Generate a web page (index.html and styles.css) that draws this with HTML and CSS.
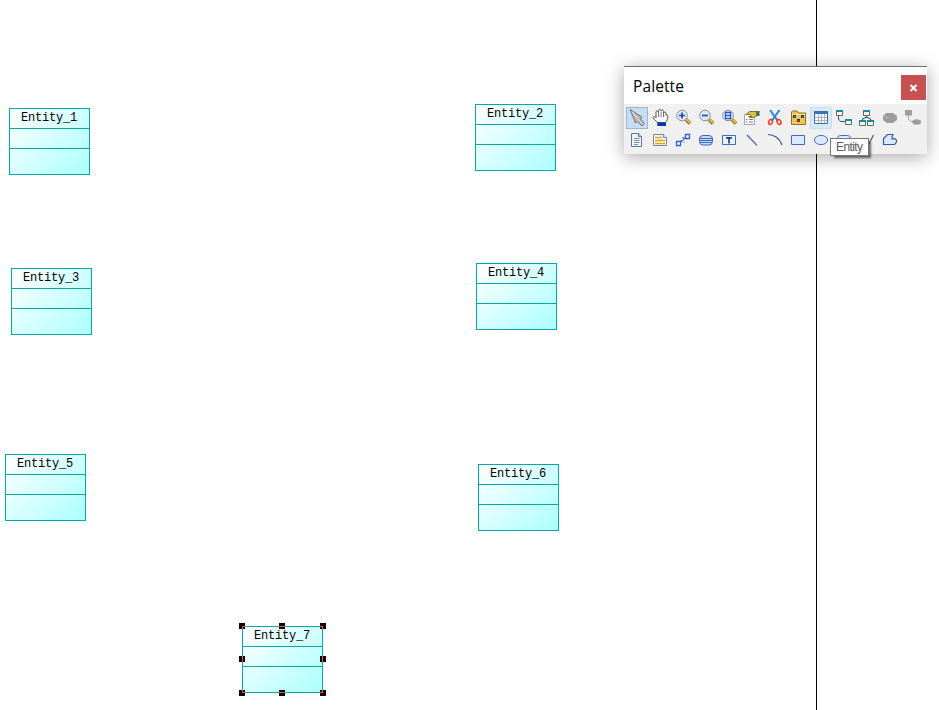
FILE: index.html
```html
<!DOCTYPE html>
<html lang="en">
<head>
<meta charset="utf-8">
<title>Diagram</title>
<link rel="stylesheet" href="styles.css">
</head>
<body>
<main class="canvas">
  <div class="page-edge"></div>
  <section class="entity e1"><h2>Entity_1</h2><div></div><div></div></section>
  <section class="entity e2"><h2>Entity_2</h2><div></div><div></div></section>
  <section class="entity e3"><h2>Entity_3</h2><div></div><div></div></section>
  <section class="entity e4"><h2>Entity_4</h2><div></div><div></div></section>
  <section class="entity e5"><h2>Entity_5</h2><div></div><div></div></section>
  <section class="entity e6"><h2>Entity_6</h2><div></div><div></div></section>
  <section class="entity e7"><h2>Entity_7</h2><div></div><div></div>
    <svg class="handles" width="87" height="73" shape-rendering="crispEdges">
      <path d="M0 0h6v6H0zM40 0h6v6h-6zM81 0h6v6h-6zM0 33h6v6H0zM81 33h6v6h-6zM0 67h6v6H0zM40 67h6v6h-6zM81 67h6v6h-6z" fill="#000"/>
      <path d="M6 3.500H3.500V6M40 3.500h6M81 3.500h2.500V6M3.500 33v6M83.500 33v6M3.500 67v2.500H6M40 69.500h6M81 69.500h2.500V67" fill="none" stroke="#ff5050"/>
    </svg>
  </section>

  <aside class="palette">
    <header class="titlebar"><span class="title">Palette</span>
      <button class="close" aria-label="Close"><svg width="9" height="8"><path d="M1.500 1l6 6M7.500 1l-6 6" stroke="#fff" stroke-width="1.900"/></svg></button>
    </header>
    <div class="tools">
      <svg class="tool selected" viewBox="0 0 22 22"><path d="M4 2.500l12 7.500-1.500 2 4 4.500-2.500 2.500-4.500-4.500-2 1.500z" fill="#bab5b0" stroke="#707479"/><path d="M6 4.500l5.500 7 5 5.500" stroke="#ece8e3" fill="none"/></svg>
      <svg class="tool" viewBox="0 0 22 22"><path d="M8.500 15.500L4 11c0-2 2-1.500 3 0V5c.3-1.500 2-1.500 2.500 0V3.500c.5-1.500 2-1.500 2.500 0V4c.5-1.500 2.500-1.500 2.500.5V6c.5-1.500 2.500-1.500 2.500.5v2c1-1 2 0 1.800 1-.3 2.500-1 4.500-2.300 6z" fill="#fff" stroke="#555"/><path d="M9.500 5v5M12 4.500V10M14.500 6v4" stroke="#777"/><path d="M8.300 15.500H17V19H8.300z" fill="#0039bf"/></svg>
      <svg class="tool" viewBox="0 0 22 22"><path d="M14 12.500l4 4" stroke="#8f6614" stroke-width="3.500"/><path d="M14 12l4 4" stroke="#edbd45" stroke-width="1.800"/><circle cx="10" cy="8.500" r="5.300" fill="#dceaff" stroke="#8695a8"/><path d="M7 8.500h6M10 5.500v6" stroke="#24489c" stroke-width="1.700"/></svg>
      <svg class="tool" viewBox="0 0 22 22"><path d="M14 12.500l4 4" stroke="#8f6614" stroke-width="3.500"/><path d="M14 12l4 4" stroke="#edbd45" stroke-width="1.800"/><circle cx="10" cy="8.500" r="5.300" fill="#dceaff" stroke="#858d98"/><path d="M7 8.500h6" stroke="#36598f" stroke-width="1.800"/></svg>
      <svg class="tool" viewBox="0 0 22 22"><path d="M14 12.500l4 4" stroke="#8f6614" stroke-width="3.500"/><path d="M14 12l4 4" stroke="#edbd45" stroke-width="1.800"/><circle cx="10" cy="8.500" r="5.300" fill="#dceaff" stroke="#858d98"/><path d="M7.500 5.500h5v6h-5zM7.500 8.500h5" fill="#fff" stroke="#2454d0" stroke-width="1.300"/></svg>
      <svg class="tool" viewBox="0 0 22 22"><path d="M3.500 7.500h10v10h-10z" fill="#fff" stroke="#a0a5ad"/><path d="M5 12.500h1.500M8 12.500h4M5 15h1.500M8 15h4" stroke="#707a89"/><path d="M5.500 7l3-2.500h7V9l-3 1.500H9L7.500 9.500h3L9.500 8z" fill="#d9bd45" stroke="#7c672c" stroke-width=".9"/><path d="M15.500 4h3v5h-3z" fill="#37764f"/></svg>
      <svg class="tool" viewBox="0 0 22 22"><path d="M6 3l7.500 10.500M15.500 3L8 13.500" stroke="#2587d5" stroke-width="2"/><ellipse cx="6.500" cy="15" rx="1.800" ry="2.500" transform="rotate(25 6.500 15)" fill="none" stroke="#ee3425" stroke-width="1.500"/><ellipse cx="15" cy="15" rx="1.800" ry="2.500" transform="rotate(-25 15 15)" fill="none" stroke="#ee3425" stroke-width="1.500"/></svg>
      <svg class="tool" viewBox="0 0 22 22"><path d="M4.500 17.500V5l1-1H10l1.500 2h7v11.500z" fill="#efc65c" stroke="#947020"/><path d="M5 7.500h13" stroke="#fff0a7"/><path d="M6 8h3v3H6zM14 8h3v3h-3zM10 12h3v3h-3z" fill="#3b3222"/><path d="M7 9h1.500v1.500H7z" fill="#20a5ef"/><path d="M15 9h1.500v1.500H15z" fill="#25b54b"/><path d="M11 13h1.500v1.500H11z" fill="#e43c34"/></svg>
      <svg class="tool hover" viewBox="0 0 22 22"><path d="M4.500 4.500h13v12h-13z" fill="#fff" stroke="#4d6a8b"/><path d="M4 4h14v3H4z" fill="#3673bf"/><path d="M5 10.500h12M5 13.500h12M8.500 7v9M11.500 7v9M14.500 7v9" stroke="#a3b7ca"/></svg>
      <svg class="tool" viewBox="0 0 22 22"><path d="M5.500 8v4l2 2.500H12" fill="none" stroke="#46458b"/><path d="M3.500 3.500h6v5h-6zM12.500 12.500h6v5h-6z" fill="#fffbe5" stroke="#4f706c"/><path d="M3 3h7v2H3zM12 12h7v2h-7z" fill="#1a8995"/></svg>
      <svg class="tool" viewBox="0 0 22 22"><path d="M10.500 8v2.500M6.500 14v-2l4-2 4 2v2" fill="none" stroke="#37378a"/><path d="M7.500 3.500h6v5h-6zM3.500 13.500h6v5h-6zM11.500 13.500h6v5h-6z" fill="#fffbe5" stroke="#4f706c"/><path d="M7 3h7v2H7zM3 13h7v2H3zM11 13h7v2h-7z" fill="#1a8995"/></svg>
      <svg class="tool" viewBox="0 0 22 22"><path d="M7 6h7l4 3v4l-4 3H8l-4-3V9z" fill="#9d9d9d"/><path d="M6 10.500h4" stroke="#b9b9b9"/></svg>
      <svg class="tool" viewBox="0 0 22 22"><path d="M6.500 8v4l2 2.500H12" fill="none" stroke="#a0a0a0"/><path d="M3 3h7v5.500H3z" fill="#9d9d9d"/><ellipse cx="14.700" cy="15" rx="4.400" ry="2.800" fill="#9d9d9d"/></svg>

      <svg class="tool" viewBox="0 0 22 22"><path d="M5.500 4.500h7l3 3v10h-10z" fill="#edf3fb" stroke="#62738e"/><path d="M12.500 4.500v3h3" fill="#b7c4d5" stroke="#62738e"/><path d="M8 9.500h5.500M8 11.500h5.500M8 13.500h5.500M8 15.500h4" stroke="#71839a" stroke-width=".9"/></svg>
      <svg class="tool" viewBox="0 0 22 22"><path d="M4.500 5.500h10l3 3v8h-13z" fill="#fffdf0" stroke="#6f85b8"/><path d="M14.500 5.500v3h3" fill="#dae5fa" stroke="#6f85b8"/><path d="M6 8.500h7M6 11.500h10M6 14.500h10" stroke="#dfa311" stroke-width="1.500"/></svg>
      <svg class="tool" viewBox="0 0 22 22"><path d="M4.500 12.500h4v4h-4zM13.500 5.500h4v4h-4z" fill="#fff" stroke="#315fc6" stroke-width="1.300"/><path d="M9 12.500L13 9" stroke="#2949a5" stroke-width="1.500" stroke-dasharray="2 1"/><path d="M10 8.500h2.500M10.500 13h2" stroke="#7b8db9"/></svg>
      <svg class="tool" viewBox="0 0 22 22"><rect x="4.500" y="6.500" width="13" height="9.500" rx="3.500" fill="#c5d9fa" stroke="#426bb5"/><path d="M4 9.500h14M4 11.500h14M5 13.500h12" stroke="#426bb5"/></svg>
      <svg class="tool" viewBox="0 0 22 22"><path d="M4.500 6.500h13v9h-13z" fill="#e6f0ff" stroke="#426bb5"/><path d="M8 8.800h6M11 8.500v6" stroke="#234478" stroke-width="1.700"/></svg>
      <svg class="tool" viewBox="0 0 22 22"><path d="M6 6l10 10.300" stroke="#385daa" stroke-width="1.200"/></svg>
      <svg class="tool" viewBox="0 0 22 22"><path d="M4 5.500c6 0 12 4 14 10.500" fill="none" stroke="#405889" stroke-width="1.200"/></svg>
      <svg class="tool" viewBox="0 0 22 22"><path d="M4.500 6.500h13v9h-13z" fill="#dceaff" stroke="#426bb5"/></svg>
      <svg class="tool" viewBox="0 0 22 22"><ellipse cx="11" cy="11" rx="6.600" ry="4.600" fill="#dceaff" stroke="#426bb5"/></svg>
      <svg class="tool" viewBox="0 0 22 22"><rect x="4.500" y="6.500" width="13" height="9" rx="3" fill="#dceaff" stroke="#426bb5"/></svg>
      <svg class="tool" viewBox="0 0 22 22"><path d="M4 15l4-3 4.500 3.500L17.500 6" fill="none" stroke="#405889" stroke-width="1.200"/></svg>
      <svg class="tool" viewBox="0 0 22 22"><path d="M4.500 15.500v-6l4-4h5.500c-1 2-1.500 3-1 4.500 3.500-1 5 .5 4.500 3l-2 2.500z" fill="#dceaff" stroke="#365798" stroke-width="1.200"/></svg>
    </div>
    <div class="tooltip">Entity</div>
  </aside>
</main>
</body>
</html>
```
FILE: styles.css
```css
* { box-sizing: border-box; }
body { margin: 0; background: #fff; }
.canvas { position: relative; width: 939px; height: 710px; overflow: hidden; }
.page-edge { position: absolute; left: 816px; top: 0; width: 1px; height: 710px; background: #000; }

.entity {
  position: absolute;
  width: 81px;
  height: 67px;
  display: grid;
  grid-template-rows: 19px 20px 26px;
  border: 1px solid #00a8a8;
  background: linear-gradient(135deg, #fff 0%, #b0ffff 95%);
}
.entity h2 {
  margin: 0;
  padding: 1px 0 0 11px;
  font: 12px/17px "Liberation Mono", monospace;
  letter-spacing: -0.2px;
  white-space: nowrap;
  color: #000;
}
.entity > div { border-top: 1px solid #00a8a8; }
.e1 { left: 9px; top: 108px; }
.e2 { left: 475px; top: 104px; }
.e3 { left: 11px; top: 268px; }
.e4 { left: 476px; top: 263px; }
.e5 { left: 5px; top: 454px; }
.e6 { left: 478px; top: 464px; }
.e7 { left: 242px; top: 626px; }
.handles { position: absolute; left: -4px; top: -4px; }

.palette {
  position: absolute;
  left: 624px;
  top: 66px;
  width: 303px;
  height: 88px;
  border-top: 1px solid #6e6e6e;
  background: #f0f0f0;
  box-shadow: 0 3px 17px rgba(0, 0, 0, 0.34);
}
.titlebar {
  display: flex;
  align-items: flex-start;
  justify-content: space-between;
  height: 37px;
  padding: 8px 1px 0 9px;
  background: #fff;
}
.title { font: 15.5px/22px "Open Sans", sans-serif; color: #000; letter-spacing: 0.1px; }
.close {
  display: flex;
  align-items: center;
  justify-content: center;
  width: 25px;
  height: 25px;
  padding: 0;
  border: 0;
  background: #c75050;
}
.tools {
  display: grid;
  grid-template-columns: repeat(13, 22px);
  grid-auto-rows: 22px;
  column-gap: 1px;
  padding: 3px 2px 0;
}
.tool { display: block; width: 22px; height: 22px; }
.selected { background: #c4dff5; outline: 1px solid #a0b4c4; outline-offset: -1px; }
.hover { background: #d8e9f7; outline: 1px solid #c5dff3; outline-offset: -1px; }
.tooltip {
  position: absolute;
  left: 206px;
  top: 71px;
  width: 39px;
  height: 18px;
  padding-left: 5px;
  border: 1px solid #767676;
  background: #fff;
  box-shadow: 3px 3px 2px -1px rgba(0, 0, 0, 0.55);
  font: 12px/17px "Liberation Sans", sans-serif;
  letter-spacing: -0.6px;
  color: #575757;
}
```
